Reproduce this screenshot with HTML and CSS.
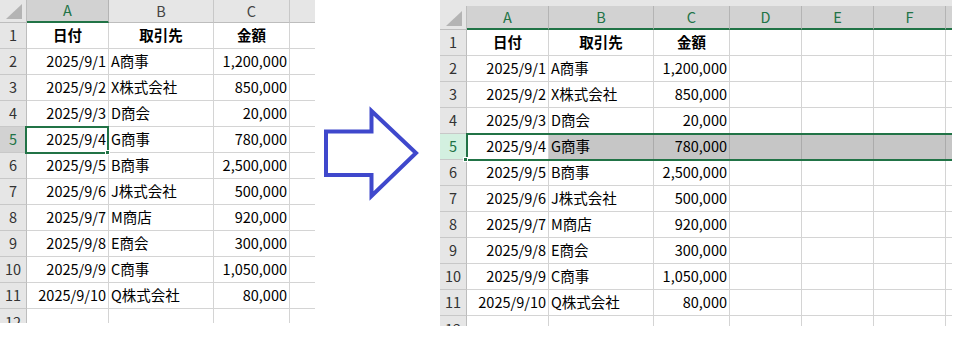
FILE: index.html
```html
<!DOCTYPE html>
<html lang="ja">
<head>
  <meta charset="utf-8">
  <title>行の選択</title>
  <link rel="stylesheet" href="styles.css">
</head>
<body>
<div class="page">
  <div class="sheet left">
    <div class="corner"></div><div class="ch on">A</div><div class="ch">B</div><div class="ch">C</div><div class="ch end"></div>
    <div class="rh">1</div><div class="c h">日付</div><div class="c h">取引先</div><div class="c h">金額</div><div class="c end"></div>
    <div class="rh">2</div><div class="c r">2025/9/1</div><div class="c">A商事</div><div class="c r">1,200,000</div><div class="c end"></div>
    <div class="rh">3</div><div class="c r">2025/9/2</div><div class="c">X株式会社</div><div class="c r">850,000</div><div class="c end"></div>
    <div class="rh">4</div><div class="c r">2025/9/3</div><div class="c">D商会</div><div class="c r">20,000</div><div class="c end"></div>
    <div class="rh on">5</div><div class="c r">2025/9/4</div><div class="c">G商事</div><div class="c r">780,000</div><div class="c end"></div>
    <div class="rh">6</div><div class="c r">2025/9/5</div><div class="c">B商事</div><div class="c r">2,500,000</div><div class="c end"></div>
    <div class="rh">7</div><div class="c r">2025/9/6</div><div class="c">J株式会社</div><div class="c r">500,000</div><div class="c end"></div>
    <div class="rh">8</div><div class="c r">2025/9/7</div><div class="c">M商店</div><div class="c r">920,000</div><div class="c end"></div>
    <div class="rh">9</div><div class="c r">2025/9/8</div><div class="c">E商会</div><div class="c r">300,000</div><div class="c end"></div>
    <div class="rh">10</div><div class="c r">2025/9/9</div><div class="c">C商事</div><div class="c r">1,050,000</div><div class="c end"></div>
    <div class="rh">11</div><div class="c r">2025/9/10</div><div class="c">Q株式会社</div><div class="c r">80,000</div><div class="c end"></div>
    <div class="rh cut">12</div><div class="c cut"></div><div class="c cut"></div><div class="c cut"></div><div class="c cut end"></div>
    <div class="cursor cell-a5"></div>
    <div class="handle handle-a5"></div>
  </div>

  <svg class="arrow" width="125" height="341" viewBox="0 0 125 341">
    <polygon points="11,131.5 56.5,131.5 56.5,111 101,153 56.5,196 56.5,175 11,175" fill="none" stroke="#3f48cc" stroke-width="4"/>
  </svg>

  <div class="sheet right">
    <div class="band"></div>
    <div class="corner"></div><div class="ch on">A</div><div class="ch on">B</div><div class="ch on">C</div><div class="ch on">D</div><div class="ch on">E</div><div class="ch on">F</div><div class="ch on end"></div>
    <div class="rh">1</div><div class="c h">日付</div><div class="c h">取引先</div><div class="c h">金額</div><div class="c"></div><div class="c"></div><div class="c"></div><div class="c end"></div>
    <div class="rh">2</div><div class="c r">2025/9/1</div><div class="c">A商事</div><div class="c r">1,200,000</div><div class="c"></div><div class="c"></div><div class="c"></div><div class="c end"></div>
    <div class="rh">3</div><div class="c r">2025/9/2</div><div class="c">X株式会社</div><div class="c r">850,000</div><div class="c"></div><div class="c"></div><div class="c"></div><div class="c end"></div>
    <div class="rh">4</div><div class="c r">2025/9/3</div><div class="c">D商会</div><div class="c r">20,000</div><div class="c"></div><div class="c"></div><div class="c"></div><div class="c end"></div>
    <div class="rh act">5</div><div class="c r">2025/9/4</div><div class="c sel">G商事</div><div class="c r sel">780,000</div><div class="c sel"></div><div class="c sel"></div><div class="c sel"></div><div class="c sel end"></div>
    <div class="rh">6</div><div class="c r">2025/9/5</div><div class="c">B商事</div><div class="c r">2,500,000</div><div class="c"></div><div class="c"></div><div class="c"></div><div class="c end"></div>
    <div class="rh">7</div><div class="c r">2025/9/6</div><div class="c">J株式会社</div><div class="c r">500,000</div><div class="c"></div><div class="c"></div><div class="c"></div><div class="c end"></div>
    <div class="rh">8</div><div class="c r">2025/9/7</div><div class="c">M商店</div><div class="c r">920,000</div><div class="c"></div><div class="c"></div><div class="c"></div><div class="c end"></div>
    <div class="rh">9</div><div class="c r">2025/9/8</div><div class="c">E商会</div><div class="c r">300,000</div><div class="c"></div><div class="c"></div><div class="c"></div><div class="c end"></div>
    <div class="rh">10</div><div class="c r">2025/9/9</div><div class="c">C商事</div><div class="c r">1,050,000</div><div class="c"></div><div class="c"></div><div class="c"></div><div class="c end"></div>
    <div class="rh">11</div><div class="c r">2025/9/10</div><div class="c">Q株式会社</div><div class="c r">80,000</div><div class="c"></div><div class="c"></div><div class="c"></div><div class="c end"></div>
    <div class="rh cut">12</div><div class="c cut"></div><div class="c cut"></div><div class="c cut"></div><div class="c cut"></div><div class="c cut"></div><div class="c cut"></div><div class="c cut end"></div>
    <div class="cursor row-5"></div>
    <div class="handle handle-row5"></div>
  </div>
</div>
</body>
</html>
```

FILE: styles.css
```css
body { margin: 0; font-family: "Noto Sans CJK JP", sans-serif; font-size: 14.5px; color: #000; background: #fff; }
.page { display: flex; align-items: flex-start; }
.arrow { display: block; flex: none; }

.sheet { position: relative; display: grid; flex: none; }
.left { grid-template-columns: 27px 82px 105px 76px 25px; grid-template-rows: 23px repeat(11, 26px) 14px; }
.right { grid-template-columns: 27px 82px 105px 76px 72px 72px 72px 6px; grid-template-rows: 6px 24px repeat(11, 26px) 10px; }
.sheet > div { box-sizing: border-box; }

.band { grid-column: 1 / -1; background: #e6e6e6; }

.c { display: flex; align-items: center; padding: 0 2px; white-space: nowrap; overflow: hidden; line-height: 1; border-right: 1px solid #d4d4d4; border-bottom: 1px solid #d4d4d4; }
.r { justify-content: flex-end; }
.h { justify-content: center; font-weight: bold; }
.end { border-right: none; }
.cut { border-bottom: none; }
.sel { background: #c6c6c6; border-right-color: #ababab; }

.corner { position: relative; background: #e6e6e6; border-right: 1px solid #bdbdbd; border-bottom: 1px solid #bdbdbd; }
.corner::after { content: ""; position: absolute; right: 4px; bottom: 3px; width: 16px; height: 15px; background: #b4b4b4; clip-path: polygon(100% 0, 100% 100%, 0 100%); }

.ch { display: flex; align-items: center; justify-content: center; line-height: 1; color: #444; background: #e6e6e6; border-right: 1px solid #c8c8c8; border-bottom: 1px solid #bdbdbd; }
.ch.on { background: #d2d2d2; color: #217346; border-bottom: 2px solid #217346; border-right-color: #b4b4b4; }
.ch.end { border-right: none; }

.rh { display: flex; align-items: center; justify-content: center; line-height: 1; color: #333; background: #e6e6e6; border-right: 1px solid #bdbdbd; border-bottom: 1px solid #c8c8c8; overflow: hidden; }
.rh.on { background: #d2d2d2; color: #217346; }
.rh.act { background: #d3f0e0; color: #217346; }
.rh.cut { align-items: flex-start; padding-top: 6px; border-bottom: none; }

.cursor { position: absolute; border: 2px solid #217346; pointer-events: none; }
.cell-a5 { left: 25px; top: 126px; width: 84px; height: 28px; }
.row-5 { left: 26px; top: 133px; right: 0; height: 28px; border-right: none; }
.handle { position: absolute; width: 5px; height: 5px; background: #217346; border: 1px solid #fff; }
.handle-a5 { left: 105px; top: 150px; }
.handle-row5 { left: 23px; top: 157px; }
```
